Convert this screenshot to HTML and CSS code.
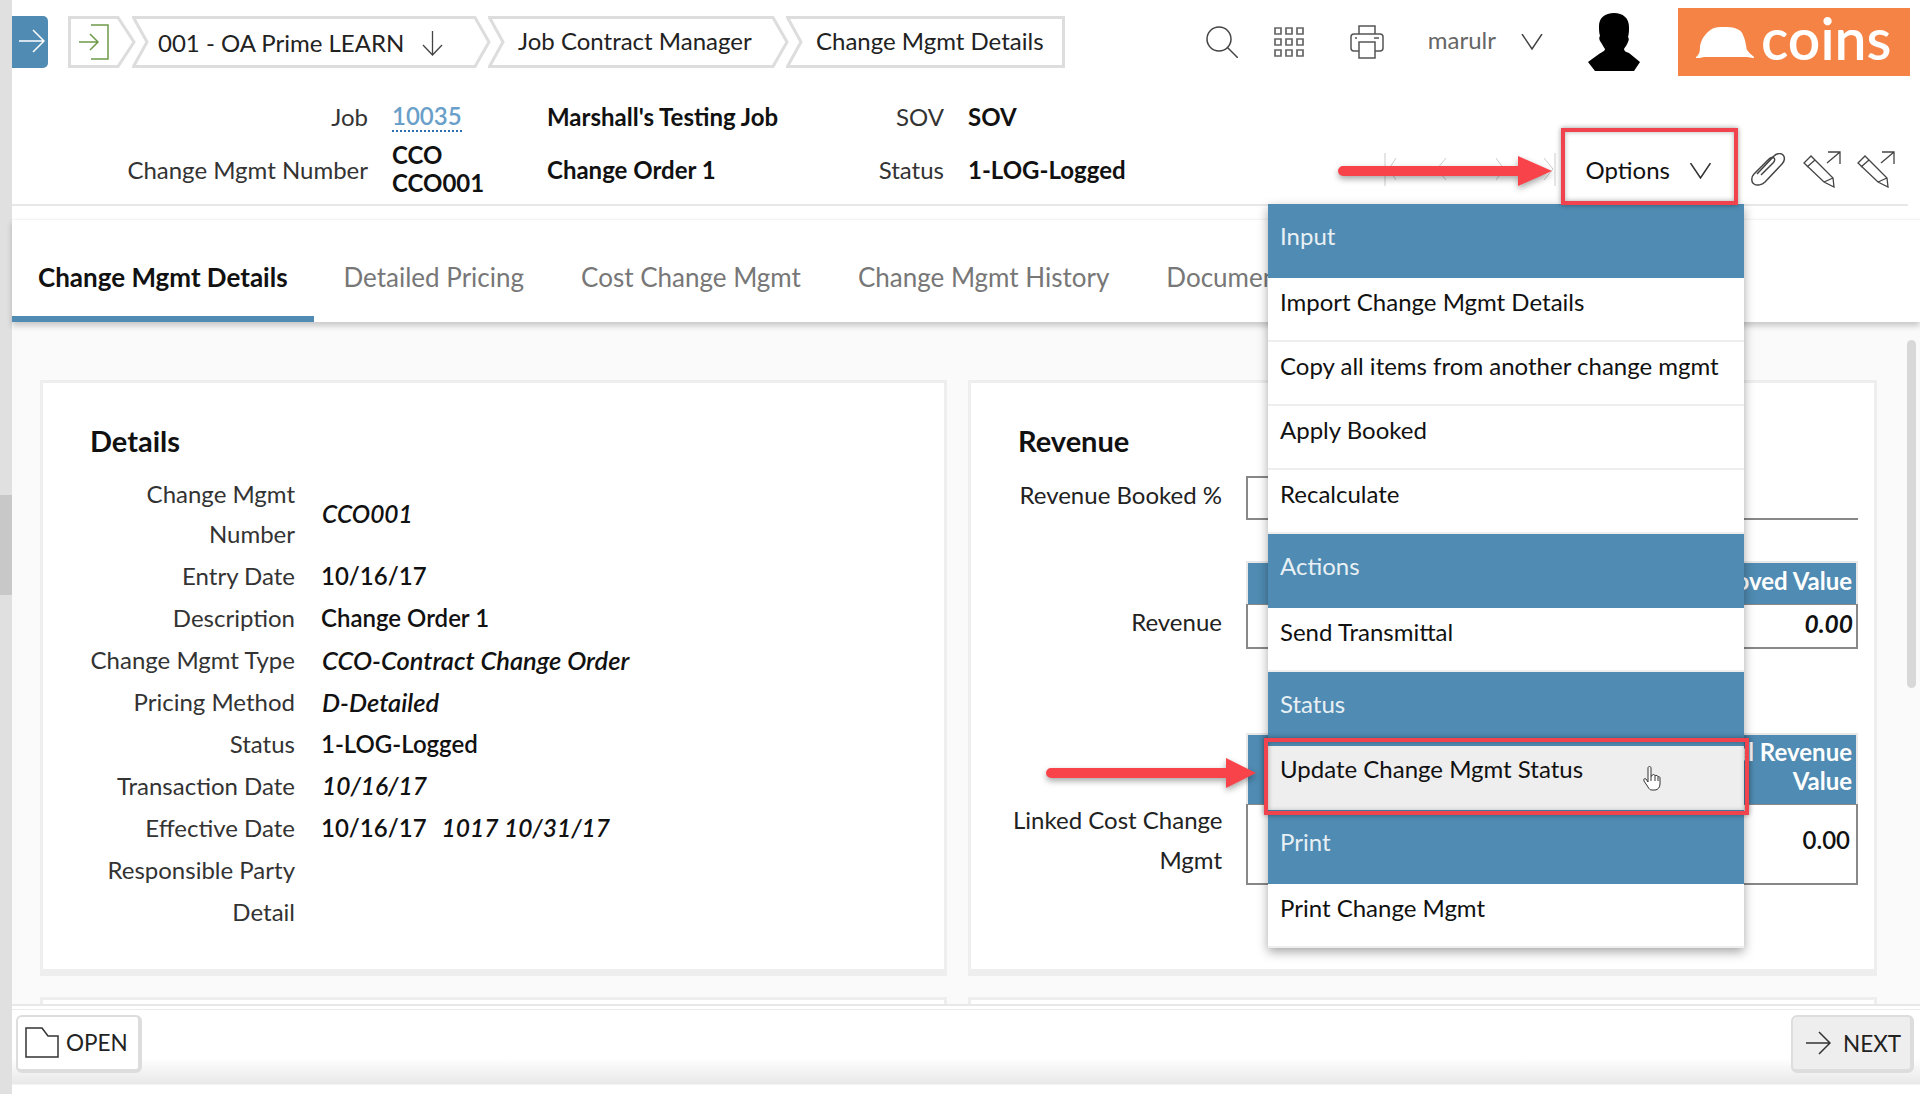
FILE: index.html
```html
<!DOCTYPE html>
<html lang="en">
<head>
  <meta charset="UTF-8">
  <title>Change Mgmt Details</title>
  <link rel="stylesheet" href="styles.css">
</head>
<body>
  <div class="sidebar"><div class="sidebar-thumb"></div></div>

  <div class="main">
    <header class="topbar">
      <button class="side-toggle">
        <svg width="26" height="24" viewBox="0 0 26 24" fill="none" stroke="#fff" stroke-width="1.5"><path d="M0 12h24M14 1l11 11-11 11"/></svg>
      </button>
      <nav class="crumbs">
        <div class="crumb crumb-home">
          <svg class="crumb-bg" width="68" height="52" viewBox="0 0 68 52"><path d="M1.5 1.5H50L66 26 50 50.500H1.500Z"/></svg>
          <svg class="crumb-icon" width="30" height="36" viewBox="0 0 30 36" fill="none" stroke="#6f9a4a" stroke-width="1.500"><path d="M12 1h17v34H12M0 18h19M11 10l8 8-8 8"/></svg>
        </div>
        <div class="crumb crumb-job">
          <svg class="crumb-bg" width="359" height="52" viewBox="0 0 359 52"><path d="M1.500 1.500H343L357 26 343 50.500H1.500L15 26Z"/></svg>
          <span class="crumb-text">001 - OA Prime LEARN</span>
          <svg width="23" height="25" viewBox="0 0 23 25" fill="none" stroke="#444" stroke-width="1.300"><path d="M11.500 0v24M2 14l9.500 10L21 14"/></svg>
        </div>
        <div class="crumb crumb-manager">
          <svg class="crumb-bg" width="301" height="52" viewBox="0 0 301 52"><path d="M1.500 1.500H285L299 26 285 50.500H1.500L15 26Z"/></svg>
          <span class="crumb-text">Job Contract Manager</span>
        </div>
        <div class="crumb crumb-details">
          <svg class="crumb-bg" width="279" height="52" viewBox="0 0 279 52"><path d="M1.500 1.500H277.500V50.500H1.500L15 26Z"/></svg>
          <span class="crumb-text">Change Mgmt Details</span>
        </div>
      </nav>

      <div class="top-tools">
        <svg width="32" height="32" viewBox="0 0 32 32" fill="none" stroke="#444" stroke-width="1.500"><circle cx="13" cy="13" r="12"/><path d="M21.500 21.500L32 32"/></svg>
        <svg class="tool-grid" width="30" height="30" viewBox="0 0 30 30" fill="none" stroke="#666" stroke-width="1.700"><path d="M1 1h6v6H1zM12 1h6v6h-6zM23 1h6v6h-6zM1 12h6v6H1zM12 12h6v6h-6zM23 12h6v6h-6zM1 23h6v6H1zM12 23h6v6h-6zM23 23h6v6h-6z"/></svg>
        <svg class="tool-print" width="34" height="34" viewBox="0 0 34 34" fill="none" stroke="#555" stroke-width="1.500"><path d="M9 9V1h16v8M9 26H4a3 3 0 0 1-3-3V12a3 3 0 0 1 3-3h26a3 3 0 0 1 3 3v11a3 3 0 0 1-3 3h-5"/><path d="M9 17h16v16H9zM5 13h2M24 13h5"/></svg>
        <span class="user-name">marulr</span>
        <svg class="tool-chevron" width="22" height="16" viewBox="0 0 22 16" fill="none" stroke="#444" stroke-width="1.500"><path d="M1 0l10 15L21 0"/></svg>
        <svg class="tool-person" width="52" height="58" viewBox="0 0 52 58"><path d="M26 0c9 0 15 5 15 14 0 3 0 7-1 10 1 1 1 3 0 5-1 3-3 5-4 7 0 2 2 3 5 4l11 9-6 9H7l-7-9 11-8c3-2 6-3 6-5-2-3-3-5-5-8-1-2-1-4 0-5-1-3-1-7-1-10C11 5 17 0 26 0z"/></svg>
        <div class="logo">
          <svg width="58" height="32" viewBox="0 0 58 32" fill="#fff"><path d="M0 30c3-2 4-5 4-10C5 11 13 0 24 0h7c8 0 15 3 16 8 3 6 3 12 4 15 2 3 5 5 7 7v1c-4 0-5-1-8-1H8c-3 1-6 1-8 1z"/></svg>
          <span class="logo-text">coins</span>
        </div>
      </div>
    </header>

    <section class="job-info">
      <div class="info-label">Job</div>
      <div class="info-value"><a class="job-link">10035</a></div>
      <div class="info-strong">Marshall's Testing Job</div>
      <div class="info-label">SOV</div>
      <div class="info-last"><span class="info-strong">SOV</span></div>

      <div class="info-label">Change Mgmt Number</div>
      <div class="info-value info-strong">CCO<br>CCO001</div>
      <div class="info-strong">Change Order 1</div>
      <div class="info-label">Status</div>
      <div class="info-last">
        <span class="info-strong">1-LOG-Logged</span>
        <div class="record-tools">
          <svg class="record-nav" width="172" height="33" viewBox="0 0 172 33" fill="none" stroke="#ccc" stroke-width="1"><path d="M1 0v33M12 5L5 16l7 11M62 5l-9 11 9 11M112 5l8 11-8 11M160 5l9 11-9 11M171 0v33"/></svg>
          <span class="options-label">Options</span>
          <svg class="options-chevron" width="23" height="16" viewBox="0 0 22 16" fill="none" stroke="#333" stroke-width="1.500"><path d="M1 0l10 15L21 0"/></svg>
          <svg class="tool-clip" width="35" height="33" viewBox="0 0 35 33" fill="none" stroke="#444" stroke-width="1.500"><path d="M6 21L23 3c3-3 7-3 9-1s2 6-1 9L14 29c-3 3-8 4-11 2s-3-7 0-10L18 6c2-2 4-2 5-1s1 3-1 5L10 22"/></svg>
          <svg class="tool-edit tool-edit-first" width="38" height="37" viewBox="0 0 38 37" fill="none" stroke="#444" stroke-width="1.300"><path d="M1 12l7-7 22 22 1 9-10-5zM4 16l8-7M21 31l9-4M24 12L37 1M25 1h12v12"/></svg>
          <svg class="tool-edit" width="38" height="37" viewBox="0 0 38 37" fill="none" stroke="#444" stroke-width="1.300"><path d="M1 12l7-7 22 22 1 9-10-5zM4 16l8-7M21 31l9-4M24 12L37 1M25 1h12v12"/></svg>
        </div>
      </div>
    </section>

    <div class="tabs">
      <a class="tab tab-active">Change Mgmt Details</a>
      <a class="tab">Detailed Pricing</a>
      <a class="tab">Cost Change Mgmt</a>
      <a class="tab">Change Mgmt History</a>
      <a class="tab">Documents</a>
    </div>

    <main class="content">
      <section class="panel">
        <h2 class="panel-title">Details</h2>
        <div class="fields">
          <div class="field-label">Change Mgmt<br>Number</div><div class="field-value em">CCO001</div>
          <div class="field-label">Entry Date</div><div class="field-value">10/16/17</div>
          <div class="field-label">Description</div><div class="field-value">Change Order 1</div>
          <div class="field-label">Change Mgmt Type</div><div class="field-value em em-wide">CCO-Contract Change Order</div>
          <div class="field-label">Pricing Method</div><div class="field-value em em-wide">D-Detailed</div>
          <div class="field-label">Status</div><div class="field-value">1-LOG-Logged</div>
          <div class="field-label">Transaction Date</div><div class="field-value em">10/16/17</div>
          <div class="field-label">Effective Date</div><div class="field-value">10/16/17 <span class="em period">1017 10/31/17</span></div>
          <div class="field-label">Responsible Party</div><div class="field-value"></div>
          <div class="field-label">Detail</div><div class="field-value"></div>
        </div>
      </section>

      <section class="panel panel-revenue">
        <h2 class="panel-title">Revenue</h2>
        <div class="rev-row rev-booked">
          <div class="rev-label rev-label-mid">Revenue Booked %</div>
          <div class="rev-input"><div class="rev-input-box"></div></div>
        </div>
        <div class="rev-row rev-approved">
          <div class="rev-label rev-label-one">Revenue</div>
          <div class="rev-table">
            <div class="rev-head">Approved Value</div>
            <div class="rev-body em">0.00</div>
          </div>
        </div>
        <div class="rev-row rev-linked">
          <div class="rev-label">Linked Cost Change<br>Mgmt</div>
          <div class="rev-table">
            <div class="rev-head rev-head-tall">Total Revenue<br>Value</div>
            <div class="rev-body rev-body-tall">0.00</div>
          </div>
        </div>
      </section>

      <section class="panel panel-next"></section>
      <section class="panel panel-next"></section>
    </main>

    <footer class="footer">
      <button class="foot-btn btn-open">
        <svg width="34" height="31" viewBox="0 0 34 31" fill="none" stroke="#333" stroke-width="1.500"><path d="M1 30V1h16l6 8h10v21z"/></svg>
        OPEN
      </button>
      <button class="foot-btn btn-next">
        <svg width="25" height="24" viewBox="0 0 25 24" fill="none" stroke="#333" stroke-width="1.500"><path d="M0 12h24M13 1l11 11-11 11"/></svg>
        NEXT
      </button>
    </footer>
  </div>

  <div class="scrollbar"></div>

  <div class="menu">
    <div class="menu-head">Input</div>
    <div class="menu-item">Import Change Mgmt Details</div>
    <div class="menu-item">Copy all items from another change mgmt</div>
    <div class="menu-item">Apply Booked</div>
    <div class="menu-item">Recalculate</div>
    <div class="menu-head">Actions</div>
    <div class="menu-item">Send Transmittal</div>
    <div class="menu-head">Status</div>
    <div class="menu-item menu-item-hover">Update Change Mgmt Status</div>
    <div class="menu-head">Print</div>
    <div class="menu-item">Print Change Mgmt</div>
  </div>

  <div class="mark mark-options"></div>
  <div class="mark mark-update"></div>

  <svg class="arrow arrow-options" width="214" height="30" viewBox="0 0 214 30"><path d="M5 10h175V0l34 15-34 15V20H5a5 5 0 0 1 0-10z"/></svg>
  <svg class="arrow arrow-update" width="210" height="30" viewBox="0 0 210 30"><path d="M5 10h175V0l30 15-30 15V20H5a5 5 0 0 1 0-10z"/></svg>

  <svg class="hand" width="18" height="25" viewBox="0 0 18 25" fill="#fff" stroke="#333" stroke-width="1"><path d="M5 2c0-2 3-2 3 0v8l1 0c0-2 3-2 3 0 0-1 3-1 3 1 1-1 2 0 2 1v6c0 3-2 6-5 6H9c-2 0-3-1-4-3l-4-6c-1-2 1-3 2-2l2 3z"/><path d="M8 10v5M12 10v5M15 11v4"/></svg>
</body>
</html>
```

FILE: styles.css
```css
* {
  box-sizing: border-box;
}

html, body {
  margin: 0;
  height: 100%;
}

body {
  display: flex;
  height: 1094px;
  overflow: hidden;
  position: relative;
  background: #fff;
  color: #333;
  font-family: Lato, "Open Sans", sans-serif;
  font-size: 24px;
}

.sidebar {
  width: 12px;
  flex: none;
  padding-top: 495px;
  background: #e0e0e0;
}

.sidebar-thumb {
  height: 100px;
  background: #c8c8c8;
}

.main {
  flex: 1;
  min-width: 0;
  display: flex;
  flex-direction: column;
}

/* top bar */
.topbar {
  height: 84px;
  flex: none;
  display: flex;
  align-items: center;
  padding-right: 10px;
}

.side-toggle {
  width: 36px;
  height: 52px;
  margin-right: 20px;
  padding: 0 0 0 4px;
  border: 0;
  border-radius: 0 5px 5px 0;
  background: #4f8bb2;
}

.crumbs {
  display: flex;
}

.crumb {
  position: relative;
  height: 52px;
  display: flex;
  align-items: center;
  color: #222;
}

.crumb-bg {
  position: absolute;
  left: 0;
  top: 0;
}

.crumb-bg path {
  fill: #fff;
  stroke: #ddd;
  stroke-width: 3;
}

.crumb-home {
  width: 68px;
  padding-left: 11px;
}

.crumb-icon,
.crumb-text,
.crumb svg:not(.crumb-bg) {
  position: relative;
}

.crumb-job {
  width: 359px;
  margin-left: -4px;
  padding-left: 26px;
}

.crumb-job .crumb-text {
  margin-right: 17px;
}

.crumb-job svg:not(.crumb-bg) {
  margin-top: 2px;
}

.crumb-manager {
  width: 301px;
  margin-left: -3px;
  padding-left: 30px;
}

.crumb-details {
  width: 279px;
  margin-left: -3px;
  padding-left: 30px;
}

.crumb-manager .crumb-text,
.crumb-details .crumb-text {
  padding-bottom: 3px;
}

.top-tools {
  margin-left: auto;
  display: flex;
  align-items: center;
}

.tool-grid {
  margin-left: 36px;
}

.tool-print {
  margin-left: 46px;
}

.user-name {
  margin-left: 44px;
  color: #666;
  padding-bottom: 5px;
}

.tool-chevron {
  margin-left: 25px;
}

.tool-person {
  margin-left: 45px;
  fill: #000;
}

.logo {
  width: 232px;
  height: 68px;
  margin-left: 38px;
  padding: 2px 0 0 18px;
  display: flex;
  align-items: center;
  background: #f58345;
}

.logo-text {
  margin-left: 7px;
  color: #fff;
  font-size: 57px;
  font-weight: 600;
  line-height: 60px;
  position: relative;
  top: -5px;
}

/* job info */
.job-info {
  height: 122px;
  flex: none;
  padding-top: 8px;
  margin-right: 12px;
  display: grid;
  grid-template-columns: 356px 179px 300px 97px 1fr;
  grid-template-rows: 48px 54px;
  row-gap: 2px;
  align-items: center;
  border-bottom: 2px solid #e8e8e8;
}

.info-label {
  text-align: right;
  color: #333;
}

.info-value {
  padding-left: 24px;
  line-height: 28px;
}

.info-strong {
  color: #111;
  font-weight: 700;
}

.job-link {
  color: #6a9fc9;
  font-weight: 600;
  border-bottom: 2px dotted #2d6fb0;
}

.info-last {
  padding-left: 24px;
  display: flex;
  align-items: center;
  justify-content: space-between;
}

.record-tools {
  display: flex;
  align-items: center;
  padding-right: 13px;
}

.options-label {
  margin-left: 30px;
  color: #111;
}

.options-chevron {
  margin-left: 19px;
  margin-top: 3px;
}

.tool-clip {
  margin-left: 39px;
}

.tool-edit {
  margin-left: 16px;
}

.tool-edit-first {
  margin-left: 17px;
}

/* tabs */
.tabs {
  height: 103px;
  margin-top: 13px;
  flex: none;
  display: flex;
  position: relative;
  z-index: 1;
  background: #fff;
  border-top: 1px solid #f5f5f5;
  box-shadow: 0 4px 6px rgba(0, 0, 0, 0.2);
  color: #777;
  font-size: 26px;
}

.tab {
  padding: 40px 28.500px 0;
  line-height: 34px;
  white-space: nowrap;
}

.tab-active {
  width: 302px;
  margin-right: 1px;
  padding-left: 26px;
  padding-right: 0;
  color: #111;
  font-weight: 700;
  border-bottom: 6px solid #4f8bb2;
}

/* panels */
.content {
  flex: 1;
  min-height: 0;
  overflow: hidden;
  padding: 58px 32px 0 28px;
  display: grid;
  grid-template-columns: 907px 909px;
  grid-auto-rows: 596px;
  gap: 21px 21px;
  background: #fafafa;
}

.panel {
  padding: 40px 16px 0 47px;
  background: #fff;
  border: 3px solid #eee;
  border-bottom-width: 7px;
}

.panel-title {
  margin: 0 0 14px;
  color: #111;
  font-size: 29px;
  font-weight: 700;
  line-height: 36px;
}

.fields {
  display: grid;
  grid-template-columns: 205px 1fr;
  column-gap: 26px;
  align-items: center;
  line-height: 40px;
}

.field-label {
  padding: 1px 0;
  text-align: right;
  white-space: nowrap;
}

.field-value {
  padding: 1px 0;
  color: #111;
  font-weight: 600;
}

.em {
  font-size: 24.500px;
  font-style: italic;
  font-weight: 600;
}

.em-wide {
  font-size: 25.500px;
}

.field-value.em {
  padding-left: 1px;
}

.period {
  margin-left: 9px;
}

.panel-revenue {
  padding-left: 42px;
}

.panel-revenue .panel-title {
  margin-left: 5px;
  margin-bottom: 17px;
}

.rev-row {
  display: grid;
  grid-template-columns: 209px 612px;
  column-gap: 24px;
  align-items: end;
  line-height: 40px;
}

.rev-label {
  text-align: right;
  color: #222;
  padding-bottom: 5px;
  white-space: nowrap;
}

.rev-label-one {
  padding-bottom: 7px;
}

.rev-label-mid {
  align-self: center;
  padding-bottom: 6px;
  line-height: 38px;
}

.rev-input {
  height: 44px;
  border-bottom: 2px solid #888;
}

.rev-input-box {
  width: 60px;
  height: 100%;
  border: 2px solid #888;
  border-width: 2px 0 0 2px;
}

.rev-approved {
  margin-top: 41px;
}

.rev-linked {
  margin-top: 84px;
}

.rev-head {
  height: 43px;
  padding: 0 4px;
  background: #4f8bb2;
  color: #fff;
  font-weight: 700;
  line-height: 36px;
  text-align: right;
  border: 2px solid #e8e8e8;
  border-bottom: 0;
}

.rev-head-tall {
  height: 71px;
  padding-top: 2px;
  line-height: 29px;
}

.rev-body {
  height: 45px;
  padding: 0 3px;
  border: 2px solid #888;
  border-top-width: 1px;
  font-weight: 700;
  line-height: 38px;
  text-align: right;
  color: #111;
}

.rev-body-tall {
  height: 81px;
  padding: 16px 6px 0;
  font-weight: 600;
}

.panel-next {
  border-bottom: 0;
}

/* footer */
.footer {
  height: 90px;
  flex: none;
  display: flex;
  justify-content: space-between;
  padding: 9px 6px 0 4px;
  border-top: 2px solid #e8e8e8;
  position: relative;
  z-index: 1;
  background: linear-gradient(#fff 0, #fff 52px, #e8e8e8 78px, #fff 79px);
  box-shadow: inset 0 3px 0 #fff, inset 0 4px 0 #ececec;
}

.foot-btn {
  height: 58px;
  display: flex;
  align-items: center;
  padding: 0;
  border: 2px solid #ddd;
  border-width: 2px 4px 4px 2px;
  border-radius: 6px;
  color: #222;
  font-family: inherit;
  font-size: 22.500px;
}

.btn-open {
  width: 126px;
  padding: 0 0 2px 7px;
  gap: 7px;
  background: #fff;
}

.btn-next {
  width: 123px;
  padding-left: 13px;
  gap: 12px;
  background: #eee;
}

/* things lying over the page */
.scrollbar {
  position: absolute;
  left: 1907px;
  top: 340px;
  width: 9px;
  height: 348px;
  border-radius: 5px;
  background: #d8d8d8;
}

.menu {
  position: absolute;
  left: 1268px;
  top: 204px;
  width: 476px;
  z-index: 2;
  background: #fff;
  color: #111;
  box-shadow: 0 4px 10px rgba(0, 0, 0, 0.35);
}

.menu-head {
  height: 74px;
  padding: 15px 12px 0;
  line-height: 34px;
  background: #4f8bb2;
  color: #e8f0f5;
}

.menu-item {
  height: 64px;
  padding: 7px 12px 0;
  line-height: 34px;
  border-bottom: 2px solid #eee;
}

.menu-item-hover {
  padding-top: 6px;
  background: #eee;
}

.mark {
  position: absolute;
  z-index: 3;
  border: 4px solid #f0434d;
  box-shadow: 0 0 5px rgba(0, 0, 0, 0.4), inset 0 0 5px rgba(0, 0, 0, 0.3);
}

.mark-options {
  left: 1561px;
  top: 128px;
  width: 177px;
  height: 77px;
}

.mark-update {
  left: 1264px;
  top: 738px;
  width: 485px;
  height: 77px;
}

.arrow {
  position: absolute;
  z-index: 3;
  fill: #f9434a;
  filter: drop-shadow(0 3px 3px rgba(0, 0, 0, 0.35));
}

.arrow-options {
  left: 1338px;
  top: 156px;
}

.arrow-update {
  left: 1046px;
  top: 758px;
}

.hand {
  position: absolute;
  z-index: 3;
  left: 1643px;
  top: 766px;
}
```
